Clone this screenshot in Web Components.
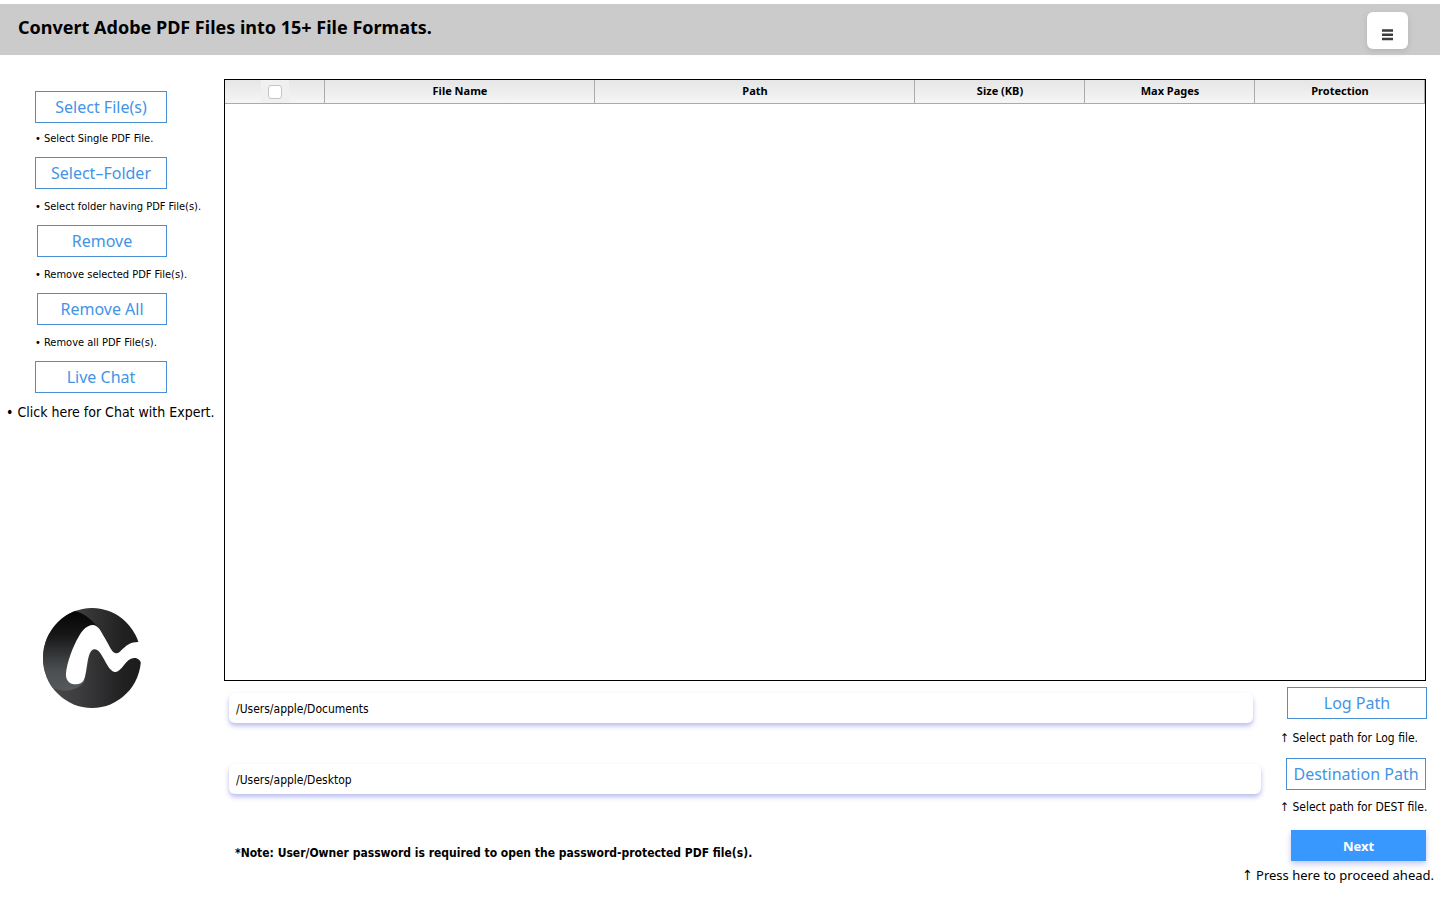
<!DOCTYPE html>
<html lang="en">
<head>
<meta charset="utf-8">
<title>PDF Converter</title>
<style>
html, body { margin: 0; }
body { background: #fff; color: #000; font-family: "DejaVu Sans Condensed", "Noto Sans", sans-serif; }
</style>
</head>
<body>
<pdf-converter></pdf-converter>

<template id="t-app">
<style>
:host { display: flex; flex-direction: column; min-height: 100vh; box-sizing: border-box; padding-top: 4px; }
.body { flex: 1; display: grid; grid-template-columns: 224px minmax(0, 1fr); }
aside { display: flex; flex-direction: column; justify-content: space-between; padding: 36px 0 180px; }
nav { display: flex; flex-direction: column; gap: 10px; padding-left: 35px; }
nav .wide { margin-left: -29px; }
app-logo { margin-left: 30px; }
main { display: flex; flex-direction: column; padding-top: 24px; min-width: 0; }
file-table { flex: 1; margin-right: 14px; }
.rows { display: grid; grid-template-rows: 71px 72px 70px; padding: 6px 6px 0 5px; }
.row { display: flex; align-items: flex-start; justify-content: space-between; }
.row path-field { flex: 1; margin-top: 6px; }
.row .path { width: 154px; }
.log { gap: 27px; }
.dest { gap: 19px; }
.next { font-family: "Noto Sans", sans-serif; }
.up { font: 14px/1px "DejaVu Sans Condensed", sans-serif; }
p { margin: 0; padding: 14px 0 0 6px; font-size: 12px; line-height: 18px; font-weight: 700; }
</style>
<app-header>Convert Adobe PDF Files into 15+ File Formats.</app-header>
<div class="body">
  <aside>
    <nav>
      <action-item label="Select File(s)" style="--gap:8px">• Select Single PDF File.</action-item>
      <action-item label="Select–Folder">• Select folder having PDF File(s).</action-item>
      <action-item label="Remove" style="--inset:2px;--width:130px">• Remove selected PDF File(s).</action-item>
      <action-item label="Remove All" style="--inset:2px;--width:130px">• Remove all PDF File(s).</action-item>
      <action-item label="Live Chat" class="wide" style="--inset:29px;--gap:11px;--caption:14px">• Click here for Chat with Expert.</action-item>
    </nav>
    <app-logo></app-logo>
  </aside>
  <main>
    <file-table></file-table>
    <div class="rows">
      <div class="row log">
        <path-field label="Log path" value="/Users/apple/Documents"></path-field>
        <action-item class="path" label="Log Path" style="--inset:7px;--width:140px;--gap:11px;--caption:12px">↑ Select path for Log file.</action-item>
      </div>
      <div class="row dest">
        <path-field label="Destination path" value="/Users/apple/Desktop"></path-field>
        <action-item class="path" label="Destination Path" style="--inset:6px;--width:140px;--gap:9px;--caption:12px">↑ Select path for DEST file.</action-item>
      </div>
      <div class="row">
        <p>*Note: User/Owner password is required to open the password-protected PDF file(s).</p>
        <action-item primary class="next" label="Next" style="--width:135px;--gap:6px;--caption:13px"><span class="up">↑</span> Press here to proceed ahead.</action-item>
      </div>
    </div>
  </main>
</div>
</template>

<template id="t-header">
<style>
:host { display: flex; align-items: center; justify-content: space-between; height: 51px; padding: 0 32px 0 18px; background: #cbcbcb; }
h1 { margin: 0 0 6px; font: 700 18px/24px "Noto Sans", sans-serif; }
button { display: flex; align-items: center; justify-content: center; box-sizing: border-box; width: 41px; height: 37px; margin: 2px 0 0; padding: 8px 0 0; border: 0; border-radius: 6px; background: #fff; box-shadow: 0 2px 6px #b4b4b4; }
</style>
<h1><slot></slot></h1>
<button type="button" aria-label="Menu"><svg width="11" height="12" viewBox="0 0 11 12"><path d="M0 1.5h11M0 5.8h11M0 10.1h11" stroke="#3c3c3c" stroke-width="2.5"/></svg></button>
</template>

<template id="t-action">
<style>
:host { display: block; white-space: nowrap; }
button { display: block; box-sizing: border-box; width: var(--width, 132px); height: 32px; margin: 0 0 var(--gap, 10px) var(--inset, 0); padding: 0; border: 1px solid #4a90d4; background: #fff; color: #4394e6; font: 16px/20px "Noto Sans", sans-serif; white-space: nowrap; }
:host([primary]) button { height: 31px; margin-left: auto; margin-right: 8px; border: 0; background: #3898fe; color: #fff; font-size: 13px; font-weight: 700; box-shadow: 0 3px 6px #c4c8ee; }
div { font-size: var(--caption, 11px); line-height: 16px; }
</style>
<button type="button"></button>
<div><slot></slot></div>
</template>

<template id="t-field">
<style>
:host { display: block; min-width: 0; }
input { display: block; box-sizing: border-box; width: 100%; height: 30px; margin: 0; padding: 1px 7px 0; border: 0; border-radius: 6px; background: #fff; color: #000; font: 12px/18px "DejaVu Sans Condensed", "Noto Sans", sans-serif; box-shadow: 0 3px 5px #b9bdee; outline: 0; }
</style>
<input type="text">
</template>

<template id="t-table">
<style>
:host { display: block; box-sizing: border-box; border: 1px solid #000; background: #fff; }
table { width: 100%; table-layout: fixed; border-collapse: separate; border-spacing: 0; }
th { box-sizing: border-box; height: 24px; padding: 0 0 2px 1px; border-right: 1px solid #aaa; border-bottom: 1px solid #aaa; background: linear-gradient(#e6e6e6, #f5f5f5); font: 700 11px/16px "Noto Sans", sans-serif; vertical-align: middle; }
th:first-child { padding: 0; }
label { display: flex; align-items: center; justify-content: center; width: 28px; height: 23px; margin: 0 auto; background: #f0f0f0; }
input { appearance: none; width: 14px; height: 14px; margin: 0; border: 1px solid #c4c4c4; border-radius: 3px; background: #fff; }
</style>
<table>
  <colgroup><col style="width:100px"><col style="width:270px"><col style="width:320px"><col style="width:170px"><col style="width:170px"><col style="width:170px"></colgroup>
  <thead><tr>
    <th scope="col"><label><input type="checkbox" aria-label="Select all files"></label></th>
    <th scope="col">File Name</th><th scope="col">Path</th><th scope="col">Size (KB)</th><th scope="col">Max Pages</th><th scope="col">Protection</th>
  </tr></thead>
  <tbody></tbody>
</table>
</template>

<template id="t-logo">
<style>:host { display: block; width: 125px; height: 125px; } svg { display: block; }</style>
<svg width="125" height="125" viewBox="0 0 375 375" role="img" aria-label="Logo">
  <defs>
    <linearGradient id="base" x1="0" y1="0" x2="1" y2="0"><stop offset="0" stop-color="#505254"/><stop offset=".4" stop-color="#3c3c3e"/><stop offset=".75" stop-color="#202021"/><stop offset="1" stop-color="#191919"/></linearGradient>
    <linearGradient id="leaf" x1="0" y1="0" x2="0" y2="1"><stop offset="0" stop-color="#050505"/><stop offset=".3" stop-color="#171718"/><stop offset=".75" stop-color="#4c4f51"/><stop offset="1" stop-color="#56595b"/></linearGradient>
    <clipPath id="disc"><ellipse cx="186" cy="189" rx="147" ry="150"/></clipPath>
  </defs>
  <g clip-path="url(#disc)">
    <rect width="375" height="375" fill="url(#base)"/>
    <path d="M136 48Q172 58 200 92L162 262Q130 300 70 280L0 250V48Z" fill="url(#leaf)"/>
  </g>
  <path d="M108 234C111 203 129 153 146 125C157 105 172 90 188 90C205 90 213 110 224 128C237 149 245 173 258 175C275 175 286 137 329 141L338 146L335 207C331 196 323 188 312 189C286 191 277 229 257 231C231 233 218 163 194 163C169 163 173 235 161 256C154 267 143 268 133 268C116 267 106 252 108 234Z" fill="#fff"/>
</svg>
</template>

<script>
class BaseElement extends HTMLElement {
  constructor() {
    super();
    const source = document.getElementById(this.constructor.template);
    this.attachShadow({ mode: "open" }).append(source.content.cloneNode(true));
  }
}
class AppHeader extends BaseElement { static template = "t-header"; }
class AppLogo extends BaseElement { static template = "t-logo"; }
class FileTable extends BaseElement { static template = "t-table"; }
class ActionItem extends BaseElement {
  static template = "t-action";
  connectedCallback() {
    this.shadowRoot.querySelector("button").textContent = this.getAttribute("label");
  }
}
class PathField extends BaseElement {
  static template = "t-field";
  connectedCallback() {
    const input = this.shadowRoot.querySelector("input");
    input.value = this.getAttribute("value");
    input.setAttribute("aria-label", this.getAttribute("label"));
  }
}
class PdfConverter extends BaseElement { static template = "t-app"; }
customElements.define("app-header", AppHeader);
customElements.define("app-logo", AppLogo);
customElements.define("file-table", FileTable);
customElements.define("action-item", ActionItem);
customElements.define("path-field", PathField);
customElements.define("pdf-converter", PdfConverter);
</script>
</body>
</html>
